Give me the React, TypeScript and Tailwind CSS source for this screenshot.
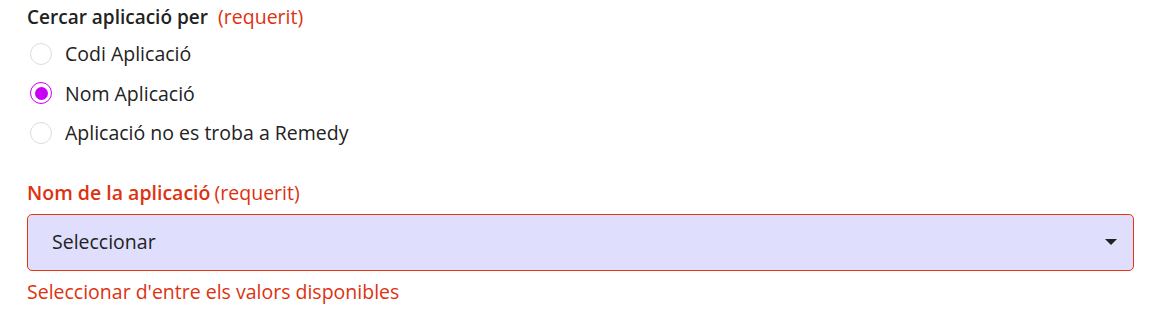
import React from "react";

const RED = "text-[#dd3210]";

function Radio({ label, checked }: { label: string; checked?: boolean }) {
  return (
    <label className="flex items-center h-[39.5px] gap-[13px] pl-[3px]">
      <span
        className={
          "w-[22px] h-[22px] rounded-full flex items-center justify-center bg-white " +
          (checked ? "border-[1.5px] border-[#c800f5]" : "border border-[#dcdcdc]")
        }
      >
        {checked && <span className="w-[13px] h-[13px] rounded-full bg-[#c800f5]" />}
      </span>
      <span className="text-[19.5px] text-[#222222]">{label}</span>
    </label>
  );
}

export default function App() {
  return (
    <div
      className="bg-white w-[1171px] h-[313px] pl-[27px] pr-[37px] pt-[4px]"
      style={{ fontFamily: '"Open Sans", sans-serif' }}
    >
      <div className="leading-[26px]">
        <span className="font-semibold text-[19px] text-[#222222]">Cercar aplicació per</span>{" "}
        <span className={"text-[19.5px] ml-[6px] " + RED}>(requerit)</span>
      </div>
      <div className="flex flex-col mt-[3px]">
        <Radio label="Codi Aplicació" />
        <Radio label="Nom Aplicació" checked />
        <Radio label="Aplicació no es troba a Remedy" />
      </div>
      <div className={"leading-[26px] mt-[27px] " + RED}>
        <span className="font-semibold text-[19.5px]">Nom de la aplicació</span>{" "}
        <span className="text-[19.5px]">(requerit)</span>
      </div>
      <div className="mt-[7px] h-[57px] rounded-[5px] border border-solid border-[color:#e8330f] bg-[#dfdffd] flex items-center justify-between pl-[24px] pr-[16px]">
        <span className="text-[19.5px] text-[#222222]">Seleccionar</span>
        <svg width="12" height="6" viewBox="0 0 12 6">
          <path d="M0 0h12L6 6z" fill="#222222" />
        </svg>
      </div>
      <div className={"text-[19.5px] leading-[26px] mt-[8px] " + RED}>
        Seleccionar d'entre els valors disponibles
      </div>
    </div>
  );
}
